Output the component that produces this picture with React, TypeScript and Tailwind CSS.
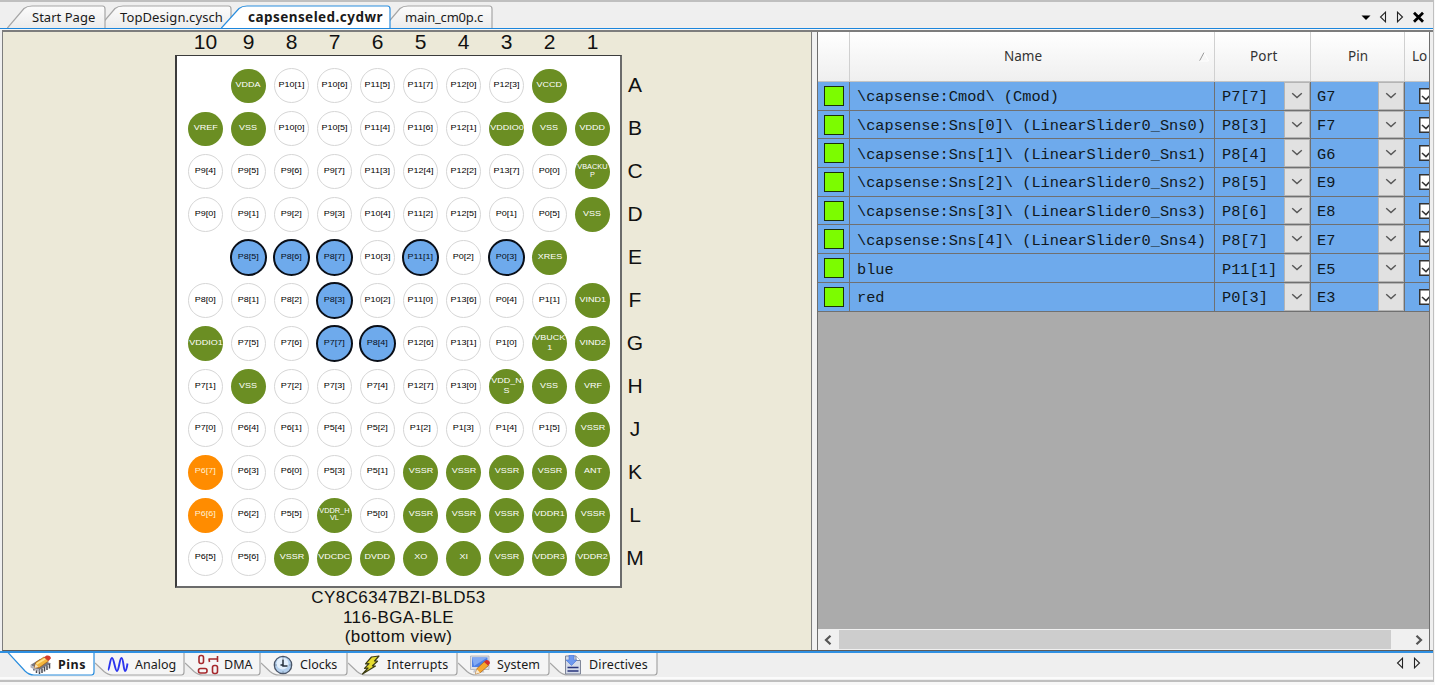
import React from "react";
import type { ReactNode } from "react";

type Kind = "io" | "pwr" | "used" | "res";

const COLUMNS = ["10", "9", "8", "7", "6", "5", "4", "3", "2", "1"];

const POWER = new Set([
  "VDDA", "VCCD", "VREF", "VSS", "VDDIO0", "VDDD", "VBACKU|P", "XRES", "VIND1", "VDDIO1", "VBUCK|1", "VIND2",
  "VDD_N|S", "VRF", "VSSR", "ANT", "VDDR_H|VL", "VDDR1", "VDCDC", "DVDD", "XO", "XI", "VDDR3", "VDDR2",
]);
const USED = new Set(["P8[5]", "P8[6]", "P8[7]", "P11[1]", "P0[3]", "P8[3]", "P7[7]", "P8[4]"]);
const RESERVED = new Set(["P6[7]", "P6[6]"]);

const BALLS: { row: string; pins: string[] }[] = [
  { row: "A", pins: ["", "VDDA", "P10[1]", "P10[6]", "P11[5]", "P11[7]", "P12[0]", "P12[3]", "VCCD", ""] },
  { row: "B", pins: ["VREF", "VSS", "P10[0]", "P10[5]", "P11[4]", "P11[6]", "P12[1]", "VDDIO0", "VSS", "VDDD"] },
  { row: "C", pins: ["P9[4]", "P9[5]", "P9[6]", "P9[7]", "P11[3]", "P12[4]", "P12[2]", "P13[7]", "P0[0]", "VBACKU|P"] },
  { row: "D", pins: ["P9[0]", "P9[1]", "P9[2]", "P9[3]", "P10[4]", "P11[2]", "P12[5]", "P0[1]", "P0[5]", "VSS"] },
  { row: "E", pins: ["", "P8[5]", "P8[6]", "P8[7]", "P10[3]", "P11[1]", "P0[2]", "P0[3]", "XRES", ""] },
  { row: "F", pins: ["P8[0]", "P8[1]", "P8[2]", "P8[3]", "P10[2]", "P11[0]", "P13[6]", "P0[4]", "P1[1]", "VIND1"] },
  { row: "G", pins: ["VDDIO1", "P7[5]", "P7[6]", "P7[7]", "P8[4]", "P12[6]", "P13[1]", "P1[0]", "VBUCK|1", "VIND2"] },
  { row: "H", pins: ["P7[1]", "VSS", "P7[2]", "P7[3]", "P7[4]", "P12[7]", "P13[0]", "VDD_N|S", "VSS", "VRF"] },
  { row: "J", pins: ["P7[0]", "P6[4]", "P6[1]", "P5[4]", "P5[2]", "P1[2]", "P1[3]", "P1[4]", "P1[5]", "VSSR"] },
  { row: "K", pins: ["P6[7]", "P6[3]", "P6[0]", "P5[3]", "P5[1]", "VSSR", "VSSR", "VSSR", "VSSR", "ANT"] },
  { row: "L", pins: ["P6[6]", "P6[2]", "P5[5]", "VDDR_H|VL", "P5[0]", "VSSR", "VSSR", "VSSR", "VDDR1", "VSSR"] },
  { row: "M", pins: ["P6[5]", "P5[6]", "VSSR", "VDCDC", "DVDD", "XO", "XI", "VSSR", "VDDR3", "VDDR2"] },
];

const SIGNALS = [
  { name: "\\capsense:Cmod\\ (Cmod)", port: "P7[7]", pin: "G7" },
  { name: "\\capsense:Sns[0]\\ (LinearSlider0_Sns0)", port: "P8[3]", pin: "F7" },
  { name: "\\capsense:Sns[1]\\ (LinearSlider0_Sns1)", port: "P8[4]", pin: "G6" },
  { name: "\\capsense:Sns[2]\\ (LinearSlider0_Sns2)", port: "P8[5]", pin: "E9" },
  { name: "\\capsense:Sns[3]\\ (LinearSlider0_Sns3)", port: "P8[6]", pin: "E8" },
  { name: "\\capsense:Sns[4]\\ (LinearSlider0_Sns4)", port: "P8[7]", pin: "E7" },
  { name: "blue", port: "P11[1]", pin: "E5" },
  { name: "red", port: "P0[3]", pin: "E3" },
];

function kindOf(pin: string): Kind {
  if (POWER.has(pin)) return "pwr";
  if (USED.has(pin)) return "used";
  if (RESERVED.has(pin)) return "res";
  return "io";
}

const BALL_STYLE: Record<Kind, string> = {
  io: "size-[35px] border border-[#d6d6d6] bg-white text-black",
  pwr: "size-[34.5px] bg-[#6b8e23] text-white",
  used: "size-[36.5px] border-[2.5px] border-[#0a0f18] bg-[#6eaaec] text-[#060e1a]",
  res: "size-[34.5px] bg-[#ff8c00] text-[#fff0d4]",
};

function labelStyle(lines: string[]) {
  if (lines.length === 1) return "-translate-y-[1.5px] text-[8px] leading-[8px] scale-x-[1.125]";
  if (lines[0].length > 5) return "-translate-y-px text-[7px] leading-[7.5px] scale-x-[1.05]";
  return "-translate-y-px text-[8px] leading-[9.5px] scale-x-[1.125]";
}

function Ball({ pin }: { pin: string }) {
  if (!pin) return <div />;
  const lines = pin.split("|");
  return (
    <div className="flex items-center justify-center">
      <div className={`flex shrink-0 items-center justify-center rounded-full ${BALL_STYLE[kindOf(pin)]}`}>
        <div className={`whitespace-nowrap text-center ${labelStyle(lines)}`}>
          {lines.map((line) => (
            <div key={line}>{line}</div>
          ))}
        </div>
      </div>
    </div>
  );
}

function PackageView() {
  return (
    <section className="flex w-[809px] flex-col border-r border-[#7d7d7d] bg-[#ece9d8] pl-[172px] font-['Liberation_Sans',sans-serif] text-[#111]">
      <div className="ml-[9px] grid h-[23px] w-[430px] shrink-0 grid-cols-10 text-center text-[21px] leading-[20px]">
        {COLUMNS.map((c) => (
          <div key={c}>{c}</div>
        ))}
      </div>
      <div className="flex">
        <div className="grid h-[533px] w-[447px] grid-cols-[repeat(10,43px)] grid-rows-[repeat(12,42.96px)] border-2 border-t-[1.5px] border-[#6b6b6b] border-l-[#3c3c3c] border-t-[#3c3c3c] bg-white pl-[7px] pt-[8.4px]">
          {BALLS.flatMap(({ row, pins }) => pins.map((pin, i) => <Ball key={row + i} pin={pin} />))}
        </div>
        <div className="grid w-[26px] grid-rows-[repeat(12,42.96px)] pt-[8.5px] text-center text-[21px]">
          {BALLS.map(({ row }) => (
            <div key={row} className="flex items-center justify-center">
              {row}
            </div>
          ))}
        </div>
      </div>
      <div className="w-[447px] text-center text-[17px] leading-[19.6px] tracking-[0.42px]">
        <div>CY8C6347BZI-BLD53</div>
        <div>116-BGA-BLE</div>
        <div>(bottom view)</div>
      </div>
    </section>
  );
}

function Chevron() {
  return (
    <div className="flex h-full w-[26px] shrink-0 items-center justify-center border border-[#b4b4b4] bg-[#e1e1e1]">
      <svg width="12" height="8" viewBox="0 0 12 8" fill="none" stroke="#555" strokeWidth="1.4">
        <path d="M1.2 1.2 6 5.6l4.8-4.4" />
      </svg>
    </div>
  );
}

const GRID = "grid grid-cols-[32px_365px_96px_94px_24px] overflow-hidden";

function PinTable() {
  return (
    <section className="flex w-[613px] flex-col overflow-hidden border-x border-[#6e6e6e] bg-[#ababab]">
      <div
        className={`${GRID} h-[50px] shrink-0 border-b border-[#c4c4c4] bg-linear-to-b from-white to-[#efefef] font-['Noto_Sans',sans-serif] text-[13.5px] text-[#333]`}
      >
        <div className="border-r border-[#d0d0d0]" />
        <div className="flex items-center border-r border-[#d0d0d0] pl-[154px]">
          <span className="w-[195px]">Name</span>
          <svg width="10" height="10" viewBox="0 0 10 10" fill="none">
            <path d="M.5 9 5 .5" stroke="#999" />
            <path d="M5 .5 9.5 9H.5" stroke="#fff" />
          </svg>
        </div>
        <div className="flex items-center border-r border-[#d0d0d0] pl-[35px] tracking-[0.2px]">Port</div>
        <div className="flex items-center border-r border-[#d0d0d0] pl-[37px]">Pin</div>
        <div className="flex items-center pl-[7px]">Lo</div>
      </div>
      {SIGNALS.map((s) => (
        <div
          key={s.name}
          className={`${GRID} h-[28.7px] shrink-0 border-b border-[#707070] bg-[#6eaaec] font-['Liberation_Mono',monospace] text-[15.3px] text-[#101820]`}
        >
          <div className="flex items-center border-r border-[#707070] pl-[6px]">
            <div className="size-[20px] border-[1.5px] border-[#1c3008] bg-[#7cfc00]" />
          </div>
          <div className="flex items-center whitespace-pre border-r border-[#707070] pl-[7px] pt-[4px]">{s.name}</div>
          <div className="flex items-center justify-between border-r border-[#707070] pl-[7px]">
            <span className="pt-[4px]">{s.port}</span>
            <Chevron />
          </div>
          <div className="flex items-center justify-between border-r border-[#707070] pl-[6px]">
            <span className="pt-[4px]">{s.pin}</span>
            <Chevron />
          </div>
          <div className="flex items-center pl-[14px]">
            <svg className="shrink-0" width="16" height="16" viewBox="0 0 16 16" fill="#fff" stroke="#333">
              <path d="M.75.75h14.5v14.5H.75z" strokeWidth="1.5" />
              <path d="m3 8 4 3.6 6-6.4" fill="none" strokeWidth="1.5" />
            </svg>
          </div>
        </div>
      ))}
      <div className="mt-auto flex h-[21px] items-center bg-[#f0f0f0] pl-[6px] pr-[6px]">
        <svg width="8" height="10" viewBox="0 0 8 10" fill="none" stroke="#555" strokeWidth="2.2">
          <path d="M6.5.8 2 5l4.5 4.2" />
        </svg>
        <div className="ml-[7px] h-[19px] w-[552px] bg-[#cdcdcd]" />
        <svg className="ml-auto" width="8" height="10" viewBox="0 0 8 10" fill="none" stroke="#555" strokeWidth="2.2">
          <path d="M1.5.8 6 5 1.5 9.2" />
        </svg>
      </div>
    </section>
  );
}

function TopTab({ w, slope, active, className, children }: { w: number; slope: number; active?: boolean; className: string; children: ReactNode }) {
  const d = `M0 23.5 L${slope - 6} 3.5 Q${slope - 3} 1 ${slope + 2} 1 H${w - 3.5} Q${w - 1} 1 ${w - 1} 4 V23.5`;
  return (
    <div className={`relative flex h-[23px] shrink-0 items-center pt-[2px] ${className}`}>
      <svg className="absolute left-0 top-0" width={w} height="23" viewBox={`0 0 ${w} 23`}>
        <defs>
          <linearGradient id="tabFace" x1="0" y1="0" x2="0" y2="1">
            <stop offset="0" stopColor="#fcfcfc" />
            <stop offset="1" stopColor="#ebebeb" />
          </linearGradient>
        </defs>
        <path d={d} fill={active ? "#fff" : "url(#tabFace)"} stroke={active ? "#2b8ede" : "#a6a6a6"} strokeWidth="1.2" />
      </svg>
      <span className="relative whitespace-nowrap">{children}</span>
    </div>
  );
}

function BottomTab({ w, active, className, icon, children }: { w: number; active?: boolean; className: string; icon: ReactNode; children: ReactNode }) {
  const d = active
    ? `M.5 -1 L18 18 Q22 22 27 22 H${w - 3.5} Q${w - 1} 22 ${w - 1} 19 V-1`
    : `M0 -1 V10 L9 18.5 Q13 22 18 22 H${w - 3.5} Q${w - 1} 22 ${w - 1} 19 V-1`;
  const edge = d.replace("M0 -1 V10", "M0 10");
  return (
    <div className={`relative flex h-[23px] shrink-0 items-center ${className}`}>
      <svg className="absolute left-0 top-0" width={w} height="23" viewBox={`0 0 ${w} 23`}>
        <path d={d} fill={active ? "#fff" : "#f5f5f5"} />
        <path d={edge} fill="none" stroke={active ? "#2b8ede" : "#a6a6a6"} strokeWidth="1.2" />
      </svg>
      <span className="relative shrink-0">{icon}</span>
      <span className="relative whitespace-nowrap pt-px">{children}</span>
    </div>
  );
}

const PinsIcon = (
  <svg width="22" height="20" viewBox="0 0 22 20">
    <path d="M.5 10 10 4l11 4.500L9.500 15z" fill="#77777f" />
    <path d="M9.500 14.500V19M12 13.500V18M14.500 12v4.500M17 10.500V15M19.500 9v4.500M6.500 13v5M4 12v3.500" stroke="#4a4a52" strokeWidth="1.500" />
    <path d="M.5 10v2.500l9 4.500v-2z" fill="#b4b4be" />
    <path d="m4.500 13 1.200-5.500L14 2l4.500 4-9 6.500z" fill="#f4b63c" stroke="#a85f12" strokeWidth=".7" />
    <path d="m6.500 9 9-5.500" stroke="#ffe28c" strokeWidth="1.600" />
    <path d="M14 2.200 16.500.500q4-.7 4.500 2.800L18.500 6z" fill="#d63b2b" />
    <path d="m4.500 13 1-4L8.500 12z" fill="#f6e3c4" />
  </svg>
);
const AnalogIcon = (
  <svg width="22" height="18" viewBox="0 0 22 18" fill="none" stroke="#2b34ee" strokeWidth="1.9">
    <path d="M1 14C2.500 13.500 3 2 5 2s3 13 5 13S12.500 2 14.500 2s2 13 3.500 13c1.300 0 2-4 2.500-7.500" />
  </svg>
);
const DmaIcon = (
  <svg width="22" height="21" viewBox="0 0 22 21" fill="none" stroke="#a5282c" strokeWidth="1.6">
    <rect x="2" y="1.500" width="4.500" height="8" rx="2" />
    <rect x="1.500" y="14.500" width="8.500" height="4.500" rx="2" />
    <rect x="15.500" y="11.500" width="5" height="8" rx="2" />
    <path d="M11.500 5H20.500M20.500 2v6M12 5l.5 3" />
  </svg>
);
const ClockIcon = (
  <svg width="20" height="20" viewBox="0 0 20 20">
    <circle cx="10" cy="10" r="8.7" fill="#b4d0ee" stroke="#4a5568" strokeWidth="1.300" />
    <circle cx="9.500" cy="8.500" r="6" fill="#e3effb" />
    <path d="M10 4.500V11h4.500M7.500 10H10" fill="none" stroke="#26303c" strokeWidth="1.500" />
    <path d="M10 2.400v1M10 16.600v1M2.400 10h1M16.600 10h1" stroke="#445566" />
  </svg>
);
const BoltIcon = (
  <svg width="20" height="20" viewBox="0 0 20 20">
    <path d="M10.500 2 18 1l-4.500 5 3 .2-5 4.600 3 .2L1.500 19l5.500-6-3.500.3 4.500-4.600-3.500.1z" fill="#e6dc30" stroke="#3c3c14" strokeWidth="1.200" strokeLinejoin="round" />
  </svg>
);
const SystemIcon = (
  <svg width="21" height="20" viewBox="0 0 21 20">
    <path d="M.5 1h18.500v13.500H.5z" fill="#dcdfe6" stroke="#a9adb8" strokeWidth=".8" />
    <path d="M2 2.500h15.500V12H2z" fill="#4d7fe6" />
    <path d="M2 2.500h15.500L4 11z" fill="#83aaf3" />
    <path d="M4 14.500h9l1.500 3H3z" fill="#c5c8d0" />
    <path d="m5.500 19 1.500-5.500 7.500-7 4 4-8 7z" fill="#f5a62d" stroke="#a85f12" strokeWidth=".7" />
    <path d="M14 7 16 5q3.500-.2 4 3.200l-1.800 2.300z" fill="#d22f2b" />
    <path d="m5.500 19 1.300-4.800 3.200 3.200z" fill="#f8ead2" />
  </svg>
);
const DirectivesIcon = (
  <svg width="18" height="20" viewBox="0 0 18 20">
    <path d="M1.500 1h10.500L16.500 5.500V19H1.500z" fill="#d4dae8" stroke="#7f8699" />
    <path d="M12 1v4.500h4.500" fill="#fff" stroke="#7f8699" />
    <path d="M5 0h5v5h3l-5.500 5.500L2 5h3z" fill="#6d98ee" stroke="#4a76d4" strokeWidth=".6" />
    <path d="M3.500 12.500h11M3.500 16h11" stroke="#27347c" strokeWidth="1.6" />
  </svg>
);

function ArrowLeft() {
  return (
    <svg width="8" height="12" viewBox="0 0 8 12" fill="none" stroke="#222" strokeWidth="1.1">
      <path d="M6.500 1.200v9.600L1.500 6z" />
    </svg>
  );
}
function ArrowRight() {
  return (
    <svg width="8" height="12" viewBox="0 0 8 12" fill="none" stroke="#222" strokeWidth="1.1">
      <path d="M1.500 1.200v9.600L6.500 6z" />
    </svg>
  );
}

export default function App() {
  return (
    <div className="h-[685px] w-[1435px] overflow-hidden bg-[#f8f8f8] font-['Noto_Sans',sans-serif] text-[13px] text-[#1a1a1a]">
      <div className="flex h-[682px] w-[1434px] flex-col border-b-2 border-r border-t-2 border-[#bfbfbf] bg-[#efefef]">
        <nav className="flex h-[26px] shrink-0 items-end pl-[7px]">
          <TopTab w={99} slope={23} className="z-10 w-[91px] pl-[25px] tracking-[0.02px]">Start Page</TopTab>
          <TopTab w={134} slope={23} className="w-[123px] pl-[22px] tracking-[0.1px]">TopDesign.cysch</TopTab>
          <TopTab w={170} slope={24} active className="z-20 w-[162px] pl-[27px] text-[13.5px] font-bold tracking-[0.45px]">capsenseled.cydwr</TopTab>
          <TopTab w={110} slope={23} className="w-[110px] pl-[22px] tracking-[-0.2px]">main_cm0p.c</TopTab>
          <div className="mb-[5px] ml-auto mr-[9px] flex items-center">
            <svg width="10" height="12" viewBox="0 0 10 12">
              <path d="M.500 4.500h9L5 9z" fill="#000" />
            </svg>
            <span className="ml-[8px]"><ArrowLeft /></span>
            <span className="ml-[9px]"><ArrowRight /></span>
            <svg className="ml-[9px]" width="11" height="12" viewBox="0 0 11 12" stroke="#000" strokeWidth="2.8">
              <path d="m1 1.800 9 9M10 1.800l-9 9" />
            </svg>
          </div>
        </nav>
        <div className="h-px shrink-0 bg-[#1c86dc]" />
        <div className="h-px shrink-0 bg-[#f6f6f6]" />
        <main className="ml-[2px] flex h-[621px] shrink-0 justify-between border-b border-l border-t-2 border-[#7d7d7d] border-b-[#5c5c5c] pr-[3px]">
          <PackageView />
          <div className="w-[4px] bg-[#f2f2f2]" />
          <PinTable />
        </main>
        <nav className="flex h-[25px] shrink-0 items-start border-t-2 border-[#2f90e2] pl-[7px] text-[12.5px]">
          <BottomTab w={88} active className="z-10 w-[88px] gap-[6px] pl-[23px] font-bold tracking-[0.5px]" icon={PinsIcon}>Pins</BottomTab>
          <BottomTab w={90} className="w-[90px] gap-[6px] pl-[12px]" icon={AnalogIcon}>Analog</BottomTab>
          <BottomTab w={76} className="w-[76px] gap-[5px] pl-[12px]" icon={DmaIcon}>DMA</BottomTab>
          <BottomTab w={87} className="w-[87px] gap-[7px] pl-[12px]" icon={ClockIcon}>Clocks</BottomTab>
          <BottomTab w={110} className="w-[110px] gap-[6px] pl-[13px] tracking-[0.15px]" icon={BoltIcon}>Interrupts</BottomTab>
          <BottomTab w={92} className="w-[92px] gap-[6px] pl-[12px] tracking-[0.1px]" icon={SystemIcon}>System</BottomTab>
          <BottomTab w={108} className="w-[108px] gap-[7px] pl-[14px] tracking-[0.15px]" icon={DirectivesIcon}>Directives</BottomTab>
          <div className="ml-auto mr-[12px] mt-[4px] flex gap-[9px]">
            <ArrowLeft />
            <ArrowRight />
          </div>
        </nav>
        <div className="h-px shrink-0" />
        <div className="h-[2px] shrink-0 bg-[#fbfbfb]" />
      </div>
    </div>
  );
}
